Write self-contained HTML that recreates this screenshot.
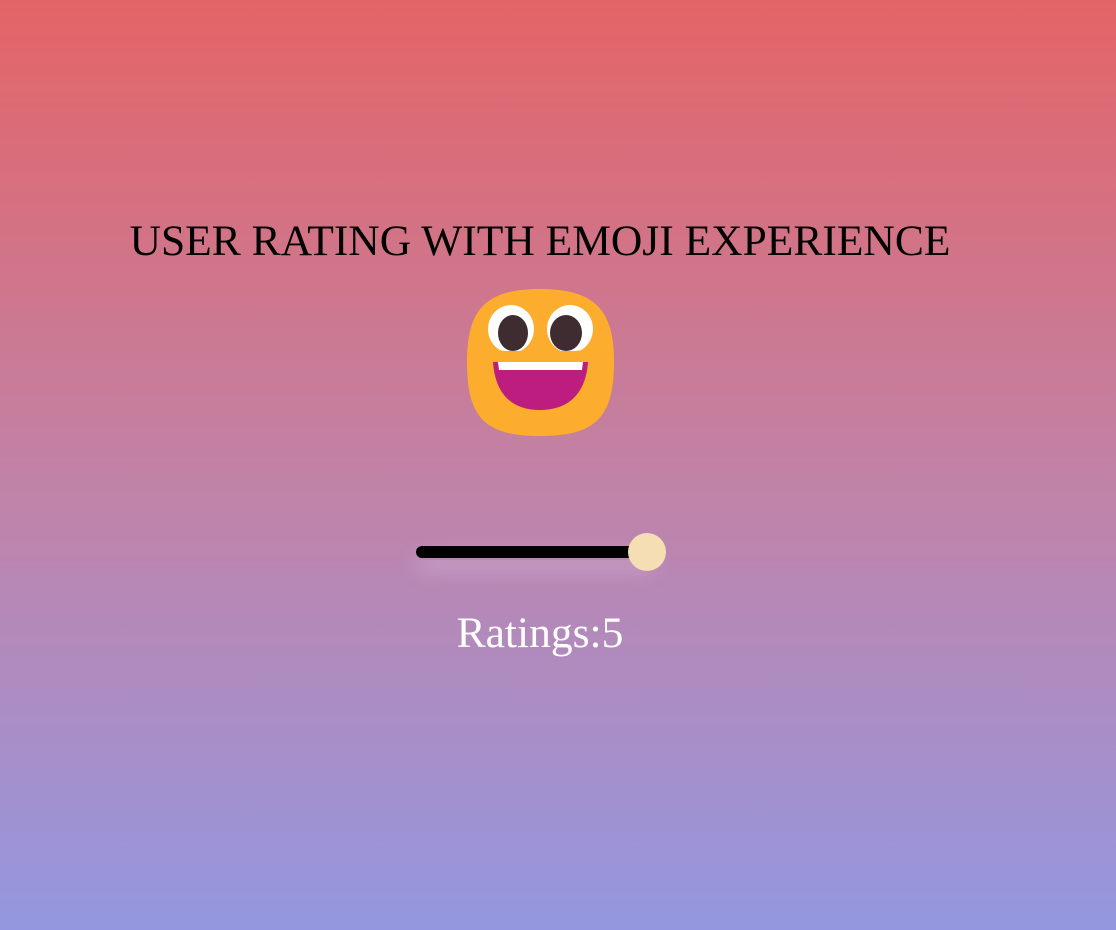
<!DOCTYPE html>
<html><head><style>
html,body{margin:0;padding:0;}
body{width:1116px;height:930px;background:linear-gradient(to bottom,#e46466,#bf84ab 55%,#9497e0);position:relative;overflow:hidden;font-family:"Liberation Serif",serif;}
.t{position:absolute;left:0;width:1080px;text-align:center;top:216px;font-size:43.5px;color:#000;line-height:50px;}
.r{position:absolute;left:0;width:1080px;text-align:center;top:608px;font-size:43.5px;color:#fff;line-height:50px;}
.glow{position:absolute;left:416px;top:546px;width:240px;height:14px;border-radius:7px;box-shadow:0 10px 22px rgba(220,200,230,0.45);}
.track{position:absolute;left:416px;top:546px;width:226px;height:12px;border-radius:6px;background:#000;}
.thumb{position:absolute;left:628px;top:533px;width:38px;height:38px;border-radius:50%;background:#f5deb3;}
</style></head><body>
<div class="t">USER RATING WITH EMOJI EXPERIENCE</div>
<svg style="position:absolute;left:462px;top:284px" width="156" height="156" viewBox="462 284 156 156">
<path d="M540 289 C595 289 614 310 614 362 C614 418 595 436 540 436 C485 436 467 418 467 362 C467 310 485 289 540 289Z" fill="#fdad2e"/>
<ellipse cx="511" cy="329" rx="23" ry="24" fill="#fff"/>
<ellipse cx="570" cy="329" rx="23" ry="24" fill="#fff"/>
<ellipse cx="513" cy="333" rx="15" ry="18" fill="#3e2c30"/>
<ellipse cx="566" cy="333" rx="16" ry="18" fill="#3e2c30"/>
<path d="M470 351 Q490 348 505 351 L575 351 Q595 348 612 351 L612 362 L470 362Z" fill="#fdad2e"/>
<path d="M493 362 L588 362 C586 392 570 410 540 410 C510 410 495 392 493 362Z" fill="#bd1d7e"/>
<path d="M498 362 L583 362 L582 370 L499 370Z" fill="#fff"/>
</svg>
<div class="glow"></div>
<div class="track"></div>
<div class="thumb"></div>
<div class="r">Ratings:5</div>
</body></html>
